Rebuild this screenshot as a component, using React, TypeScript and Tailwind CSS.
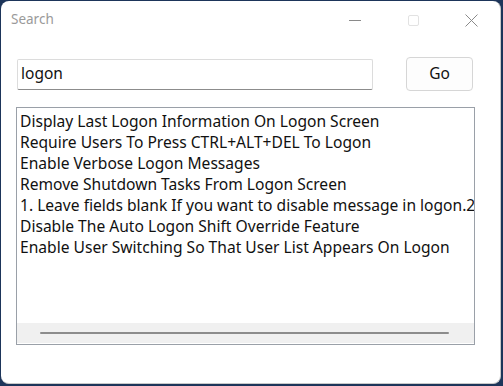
import React from "react";

const items = [
  "Display Last Logon Information On Logon Screen",
  "Require Users To Press CTRL+ALT+DEL To Logon",
  "Enable Verbose Logon Messages",
  "Remove Shutdown Tasks From Logon Screen",
  "1. Leave fields blank If you want to disable message in logon.2. Enter the caption and text of the message",
  "Disable The Auto Logon Shift Override Feature",
  "Enable User Switching So That User List Appears On Logon",
];

export default function App() {
  return (
    <div
      className="w-[503px] h-[386px] overflow-hidden bg-[#1d355a] pt-[1px] pl-[1px]"
      style={{ fontFamily: '"Noto Sans", "Open Sans", sans-serif' }}
    >
      <div className="w-[500px] h-[383px] bg-white rounded-[8px] border border-[#c9c9c9] border-l-0 border-t-0 flex flex-col">
        {/* Title bar */}
        <div className="h-[38px] flex items-center pl-[10px] relative">
          <span className="text-[13.5px] text-[#9a9a9a] leading-none">Search</span>
          <div className="ml-auto flex items-center h-full">
            <div className="w-[58px] h-full flex items-center justify-center">
              <div className="w-[12px] h-[1px] bg-[#8a8a8a]" />
            </div>
            <div className="w-[58px] h-full flex items-center justify-center">
              <div className="w-[11px] h-[11px] border border-[#e2e2e2] rounded-[2px]" />
            </div>
            <div className="w-[58px] h-full flex items-center justify-center">
              <svg width="13" height="13" viewBox="0 0 13 13">
                <path d="M0.5 0.5 L12.5 12.5 M12.5 0.5 L0.5 12.5" stroke="#8a8a8a" strokeWidth="1" fill="none" />
              </svg>
            </div>
          </div>
        </div>

        {/* Search row */}
        <div className="mt-[18px] flex items-center pl-[16px] h-[34px]">
          <div className="w-[356px] h-[31px] border border-[#dcdcdc] border-b-[#8c8c8c] rounded-[2px] flex items-center pl-[3px] text-[15.5px] text-[#111]">
            logon
          </div>
          <div className="ml-[33px] w-[67px] h-[34px] border border-[#d6d6d6] rounded-[4px] bg-[#fdfdfd] flex items-center justify-center text-[15.5px] text-[#111]">
            Go
          </div>
        </div>

        {/* List box */}
        <div className="mt-[16px] ml-[15px] w-[459px] h-[238px] border border-[#9aa0a8] flex flex-col">
          <div className="flex-1 overflow-hidden pt-[3px] pl-[3px]">
            {items.map((t) => (
              <div key={t} className="h-[21px] leading-[21px] text-[15.6px] text-[#111] whitespace-nowrap">
                {t}
              </div>
            ))}
          </div>
          <div className="h-[20px] bg-[#f0f0f0] flex items-center pl-[23px] mb-[1px]">
            <div className="w-[409px] h-[2px] rounded-full bg-[#8c8c8c]" />
          </div>
        </div>
      </div>
    </div>
  );
}
